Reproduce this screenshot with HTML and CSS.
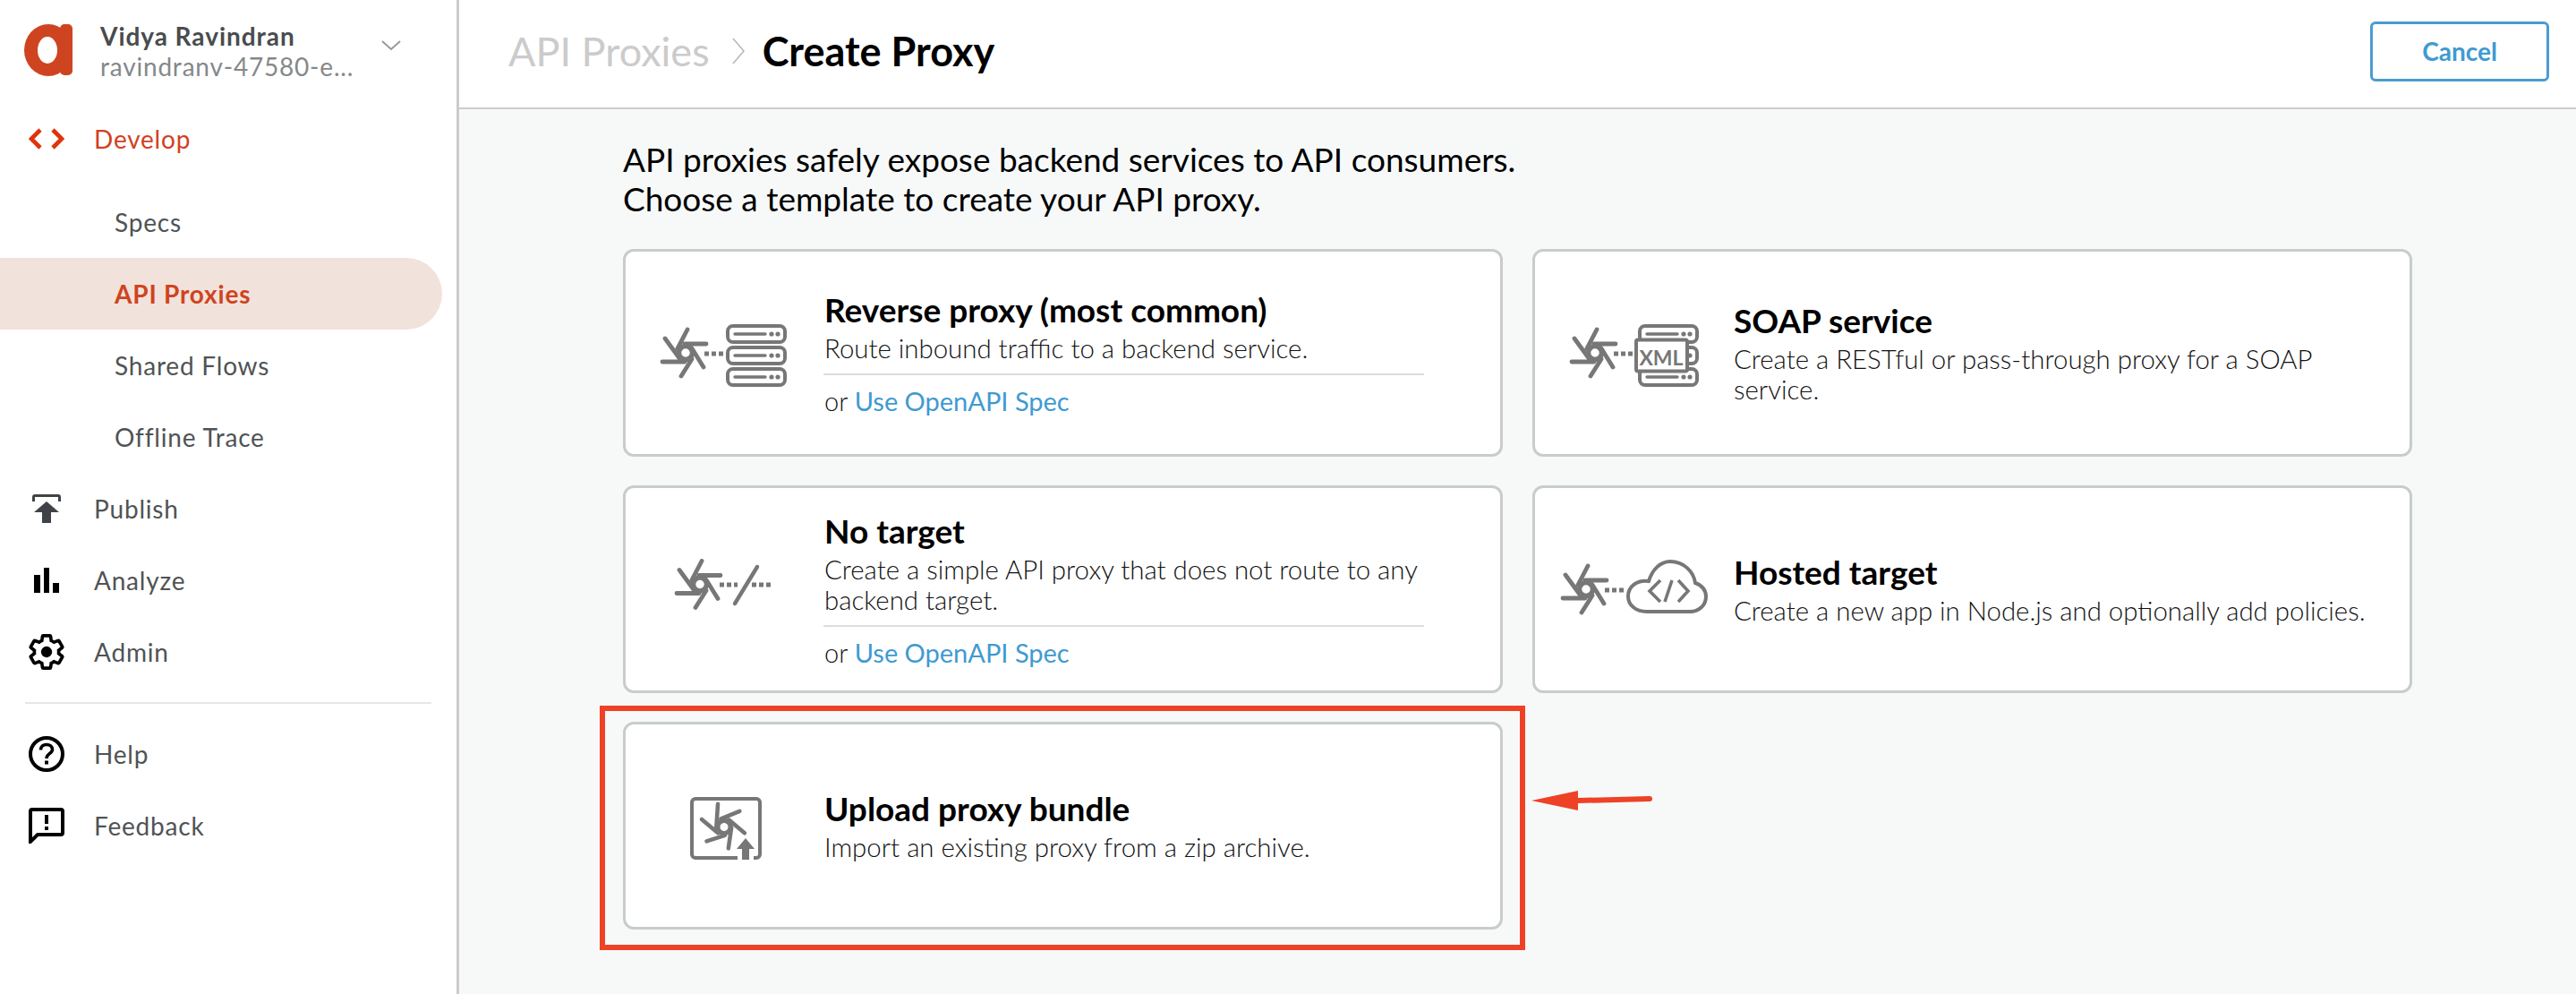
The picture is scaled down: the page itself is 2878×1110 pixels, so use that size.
FILE: index.html
```html
<!DOCTYPE html>
<html>
<head>
    <meta charset="utf-8">
    <title>Create Proxy</title>
    <link rel="stylesheet" href="styles.css">
</head>
<body>
<svg class="defs" width="0" height="0">
    <defs>
        <!-- the proxy turbine, used by every card -->
        <g id="turbine" fill="none" stroke="#777" stroke-width="4.8" stroke-linecap="round">
            <path d="M-23 -16L-4 10M2 -26L-9 -5M23 -10L-1 -10M20 16L7 -5M-5 26L7 7M-26 10L-1 10"/>
            <circle cx="0" cy="0" r="7.5" fill="#fff" stroke-width="5.5"/>
        </g>
        <g id="server" fill="none" stroke="#777">
            <rect x="2" y="2" width="64" height="18" rx="6" stroke-width="4"/>
            <path d="M10 11H44" stroke-width="3.4" stroke-linecap="round"/>
            <circle cx="51" cy="11" r="2.6" fill="#777" stroke="none"/>
            <circle cx="58" cy="11" r="2.6" fill="#777" stroke="none"/>
        </g>
    </defs>
</svg>
<div class="page">
    <aside class="sidebar">
        <div class="account">
            <svg class="logo" width="54" height="58" viewBox="0 0 54 58">
                <ellipse cx="27" cy="29" rx="27" ry="29" fill="#cf4420"/>
                <rect x="40" y="0" width="14" height="57" rx="5" fill="#cf4420"/>
                <ellipse cx="26" cy="29" rx="11" ry="15" fill="#fff"/>
            </svg>
            <div class="account-text">
                <div class="account-name">Vidya Ravindran</div>
                <div class="account-org">ravindranv-47580-e...</div>
            </div>
            <svg class="account-arrow" width="22" height="12" viewBox="0 0 22 12">
                <path d="M1 1L11 10L21 1" fill="none" stroke="#999" stroke-width="2"/>
            </svg>
        </div>
        <div class="nav-item nav-develop">
            <span class="nav-icon">
                <svg width="40" height="24" viewBox="0 0 40 24"><path d="M13 2L3 12L13 22M27 2L37 12L27 22" fill="none" stroke="#e0330c" stroke-width="4.6"/></svg>
            </span>
            Develop
        </div>
        <div class="subnav">
            <div class="subnav-item">Specs</div>
            <div class="subnav-item subnav-active">API Proxies</div>
            <div class="subnav-item">Shared Flows</div>
            <div class="subnav-item">Offline Trace</div>
        </div>
        <div class="nav-item">
            <span class="nav-icon">
                <svg width="32" height="32" viewBox="0 0 32 32"><path d="M0 8V3Q0 0 3 0H29Q32 0 32 3V8H29V3H3V8Z" fill="#3f4347"/><path d="M16 8L30 20H21V32H11V20H2Z" fill="#3f4347"/></svg>
            </span>
            Publish
        </div>
        <div class="nav-item">
            <span class="nav-icon">
                <svg width="28" height="28" viewBox="0 0 28 28"><path d="M0 8H7V28H0ZM11 0H17V28H11ZM21 17H28V28H21Z" fill="#000"/></svg>
            </span>
            Analyze
        </div>
        <div class="nav-item">
            <span class="nav-icon">
                <svg width="40" height="42" viewBox="1 1 22 22"><path d="M19.43 12.98c.04-.32.07-.64.07-.98 0-.34-.03-.66-.07-.98l2.11-1.65c.19-.15.24-.42.12-.64l-2-3.46c-.12-.22-.39-.3-.61-.22l-2.49 1c-.52-.4-1.08-.73-1.69-.98l-.38-2.65C14.46 2.18 14.25 2 14 2h-4c-.25 0-.46.18-.49.42l-.38 2.65c-.61.25-1.17.59-1.69.98l-2.49-1c-.23-.09-.49 0-.61.22l-2 3.46c-.13.22-.07.49.12.64l2.11 1.65c-.04.32-.07.65-.07.98 0 .33.03.66.07.98l-2.11 1.65c-.19.15-.24.42-.12.64l2 3.46c.12.22.39.3.61.22l2.49-1c.52.4 1.08.73 1.69.98l.38 2.65c.03.24.24.42.49.42h4c.25 0 .46-.18.49-.42l.38-2.65c.61-.25 1.17-.59 1.69-.98l2.49 1c.23.09.49 0 .61-.22l2-3.46c.12-.22.07-.49-.12-.64l-2.11-1.65z" fill="none" stroke="#000" stroke-width="2"/><circle cx="12" cy="12" r="3.4" fill="#000"/></svg>
            </span>
            Admin
        </div>
        <div class="nav-divider"></div>
        <div class="nav-item">
            <span class="nav-icon">
                <svg width="40" height="40" viewBox="0 0 40 40"><circle cx="20" cy="20" r="18" fill="none" stroke="#000" stroke-width="4"/><path d="M13.5 15.5C13.5 11.5 16.5 9.5 20 9.5C23.5 9.5 26.5 11.5 26.5 15C26.5 19.5 20 19.5 20 25" fill="none" stroke="#000" stroke-width="3.6"/><rect x="18" y="27.5" width="4" height="4" fill="#000"/></svg>
            </span>
            Help
        </div>
        <div class="nav-item">
            <span class="nav-icon">
                <svg width="40" height="40" viewBox="0 0 40 40"><path d="M2 38V4Q2 2 4 2H36Q38 2 38 4V28Q38 30 36 30H10Z" fill="none" stroke="#000" stroke-width="4"/><path d="M18 8H22V18H18ZM18 21H22V25H18Z" fill="#000"/></svg>
            </span>
            Feedback
        </div>
    </aside>
    <div class="main">
        <header class="topbar">
            <div class="crumbs">
                <span class="crumb-parent">API Proxies</span>
                <svg class="crumb-sep" width="16" height="32" viewBox="0 0 16 32"><path d="M2 2L14 16L2 30" fill="none" stroke="#b5b5b5" stroke-width="1.5"/></svg>
                <span class="crumb-current">Create Proxy</span>
            </div>
            <button class="btn-cancel">Cancel</button>
        </header>
        <div class="content">
            <p class="intro">API proxies safely expose backend services to API consumers.<br>Choose a template to create your API proxy.</p>
            <div class="cards">
                <div class="card">
                    <svg class="card-icon" width="214" height="110" viewBox="0 0 214 110">
                        <use href="#turbine" x="64" y="55"/>
                        <path d="M85 56H106" stroke="#777" stroke-width="5" stroke-dasharray="5 3"/>
                        <use href="#server" x="109" y="23"/>
                        <use href="#server" x="109" y="47"/>
                        <use href="#server" x="109" y="71"/>
                    </svg>
                    <div class="card-text">
                        <h3>Reverse proxy (most common)</h3>
                        <p>Route inbound traffic to a backend service.</p>
                        <div class="card-alt">or <a>Use OpenAPI Spec</a></div>
                    </div>
                </div>
                <div class="card">
                    <svg class="card-icon" width="214" height="110" viewBox="0 0 214 110">
                        <use href="#turbine" x="64" y="55"/>
                        <path d="M85 56H106" stroke="#777" stroke-width="5" stroke-dasharray="5 3"/>
                        <use href="#server" x="112" y="23"/>
                        <use href="#server" x="112" y="47"/>
                        <use href="#server" x="112" y="71"/>
                        <rect x="110" y="40.500" width="57" height="35" rx="2" fill="#fff" stroke="#777" stroke-width="4"/>
                        <text class="xml" x="138" y="69" text-anchor="middle">XML</text>
                    </svg>
                    <div class="card-text">
                        <h3>SOAP service</h3>
                        <p>Create a RESTful or pass-through proxy for a SOAP service.</p>
                    </div>
                </div>
                <div class="card">
                    <svg class="card-icon" width="214" height="110" viewBox="0 0 214 110">
                        <use href="#turbine" x="80" y="49.500"/>
                        <path d="M102 50H122M138 50H162" stroke="#777" stroke-width="5" stroke-dasharray="5 3"/>
                        <path d="M144 30L119 71" stroke="#777" stroke-width="4.400" stroke-linecap="round"/>
                    </svg>
                    <div class="card-text">
                        <h3>No target</h3>
                        <p>Create a simple API proxy that does not route to any backend target.</p>
                        <div class="card-alt">or <a>Use OpenAPI Spec</a></div>
                    </div>
                </div>
                <div class="card">
                    <svg class="card-icon" width="214" height="110" viewBox="0 0 214 110">
                        <use href="#turbine" x="54" y="55"/>
                        <path d="M75 56H97" stroke="#777" stroke-width="5" stroke-dasharray="5 3"/>
                        <path d="M122 80C110 80 101 73 101 63C101 52 111 44 124 46C128 33 137 24 148 24C163 24 174 35 176 48C183 50 188 56 188 63C188 73 180 80 170 80Z" fill="none" stroke="#777" stroke-width="4"/>
                        <path d="M137 45L125 57L137 69M157 45L168 57L157 69M150 45L142 69" fill="none" stroke="#777" stroke-width="3.600"/>
                    </svg>
                    <div class="card-text">
                        <h3>Hosted target</h3>
                        <p>Create a new app in Node.js and optionally add policies.</p>
                    </div>
                </div>
                <div class="card card-marked">
                    <svg class="card-icon" width="214" height="110" viewBox="0 0 214 110">
                        <rect x="71" y="25" width="76" height="66" rx="4" fill="none" stroke="#777" stroke-width="4"/>
                        <rect x="122" y="80" width="18" height="14" fill="#fff"/>
                        <use href="#turbine" transform="translate(107 56.500) rotate(40) scale(.95)"/>
                        <path d="M131 69L141 81H135V93H127V81H121Z" fill="#777"/>
                    </svg>
                    <div class="card-text">
                        <h3>Upload proxy bundle</h3>
                        <p>Import an existing proxy from a zip archive.</p>
                    </div>
                    <svg class="mark-arrow" width="136" height="24" viewBox="0 0 136 24">
                        <path d="M0 12L52 1V9L132 7Q135 7 135 10Q135 13 132 13L52 15V23Z" fill="#ee4227"/>
                    </svg>
                </div>
            </div>
        </div>
    </div>
</div>
</body>
</html>
```

FILE: styles.css
```css
*{
    padding: 0;
    margin: 0;
    box-sizing: border-box;
}
html, body{
    height: 100%;
    overflow: hidden;
    background: #fff;
    font-family: "Lato", "Liberation Sans", sans-serif;
}
.defs{
    display: block;
    height: 0;
}
.page{
    display: flex;
    height: 1110px;
}

/* sidebar */
.sidebar{
    width: 513px;
    flex-shrink: 0;
    border-right: 3px solid #ccc;
    background: #fff;
}
.account{
    display: flex;
    height: 115px;
    padding: 27px 0 0 27px;
}
.logo{
    flex-shrink: 0;
}
.account-text{
    width: 314px;
    margin: -5px 0 0 31px;
}
.account-name{
    font-size: 28px;
    line-height: 36px;
    font-weight: 700;
    color: #494c4e;
    letter-spacing: .95px;
}
.account-org{
    font-size: 28px;
    line-height: 32px;
    color: #85888a;
    letter-spacing: .8px;
}
.account-arrow{
    margin-top: 18px;
}
.nav-item{
    display: flex;
    align-items: center;
    height: 80px;
    padding-left: 32px;
    font-size: 28px;
    color: #505355;
    letter-spacing: .8px;
}
.nav-icon{
    display: flex;
    justify-content: center;
    align-items: center;
    width: 40px;
    margin-right: 33px;
}
.nav-develop{
    color: #d2401e;
}
.subnav{
    margin-top: 13px;
}
.subnav-item{
    display: flex;
    align-items: center;
    width: 494px;
    height: 80px;
    padding-left: 128px;
    font-size: 28px;
    color: #505355;
    letter-spacing: .8px;
}
.subnav-active{
    background: #f2e2dc;
    border-radius: 0 40px 40px 0;
    color: #cf4420;
    font-weight: 700;
}
.nav-divider{
    height: 2px;
    margin: 16px 28px 16px 28px;
    background: #e6e6ea;
}

/* header */
.main{
    flex: 1;
    display: flex;
    flex-direction: column;
}
.topbar{
    display: flex;
    justify-content: space-between;
    align-items: center;
    height: 122px;
    padding: 0 30px 6px 55px;
    border-bottom: 2px solid #ccc;
    background: #fff;
}
.crumbs{
    display: flex;
    align-items: center;
    font-size: 45px;
}
.crumb-parent{
    color: #cbcbcb;
}
.crumb-sep{
    margin: 0 19px 0 24px;
}
.crumb-current{
    color: #000;
    font-weight: 700;
}
.btn-cancel{
    width: 200px;
    height: 67px;
    border: 3px solid #4a9cd0;
    border-radius: 6px;
    background: #fff;
    color: #3f9ad1;
    font-family: inherit;
    font-size: 28px;
    font-weight: 700;
}

/* content */
.content{
    flex: 1;
    padding: 34px 0 0 183px;
    background: #f7f9f9;
}
.intro{
    font-size: 37px;
    line-height: 44px;
    color: #000;
    margin-bottom: 34px;
}
.cards{
    display: grid;
    grid-template-columns: 983px 983px;
    grid-auto-rows: 232px;
    column-gap: 33px;
    row-gap: 32px;
}
.card{
    position: relative;
    display: flex;
    align-items: center;
    border: 3px solid #c9cccc;
    border-radius: 12px;
    background: #fff;
}
.card-icon{
    flex-shrink: 0;
    margin-left: 3px;
    margin-right: 4px;
}
.card-text{
    width: 720px;
}
.card-text h3{
    padding-left: 1px;
    margin-bottom: 5px;
    font-size: 37px;
    line-height: 43px;
    font-weight: 700;
    color: #000;
}
.card-text p{
    padding-left: 1px;
    font-size: 29.4px;
    line-height: 34px;
    font-weight: 300;
    color: #111;
}
.card-alt{
    width: 671px;
    margin-top: 11px;
    padding: 12px 0 0 1px;
    border-top: 2px solid #ddd;
    font-size: 29px;
    line-height: 34px;
    font-weight: 300;
    color: #111;
}
.card-alt a{
    color: #3f9ad1;
    font-weight: 400;
}
.xml{
    font-family: "Lato", "Liberation Sans", sans-serif;
    font-size: 23px;
    font-weight: 700;
    fill: #777;
}

/* red annotation round the last card */
.card-marked::after{
    content: "";
    position: absolute;
    top: -21px;
    left: -29px;
    right: -28px;
    bottom: -26px;
    border: 6px solid #ee4227;
}
.mark-arrow{
    position: absolute;
    left: 1012px;
    top: 73px;
}
```
